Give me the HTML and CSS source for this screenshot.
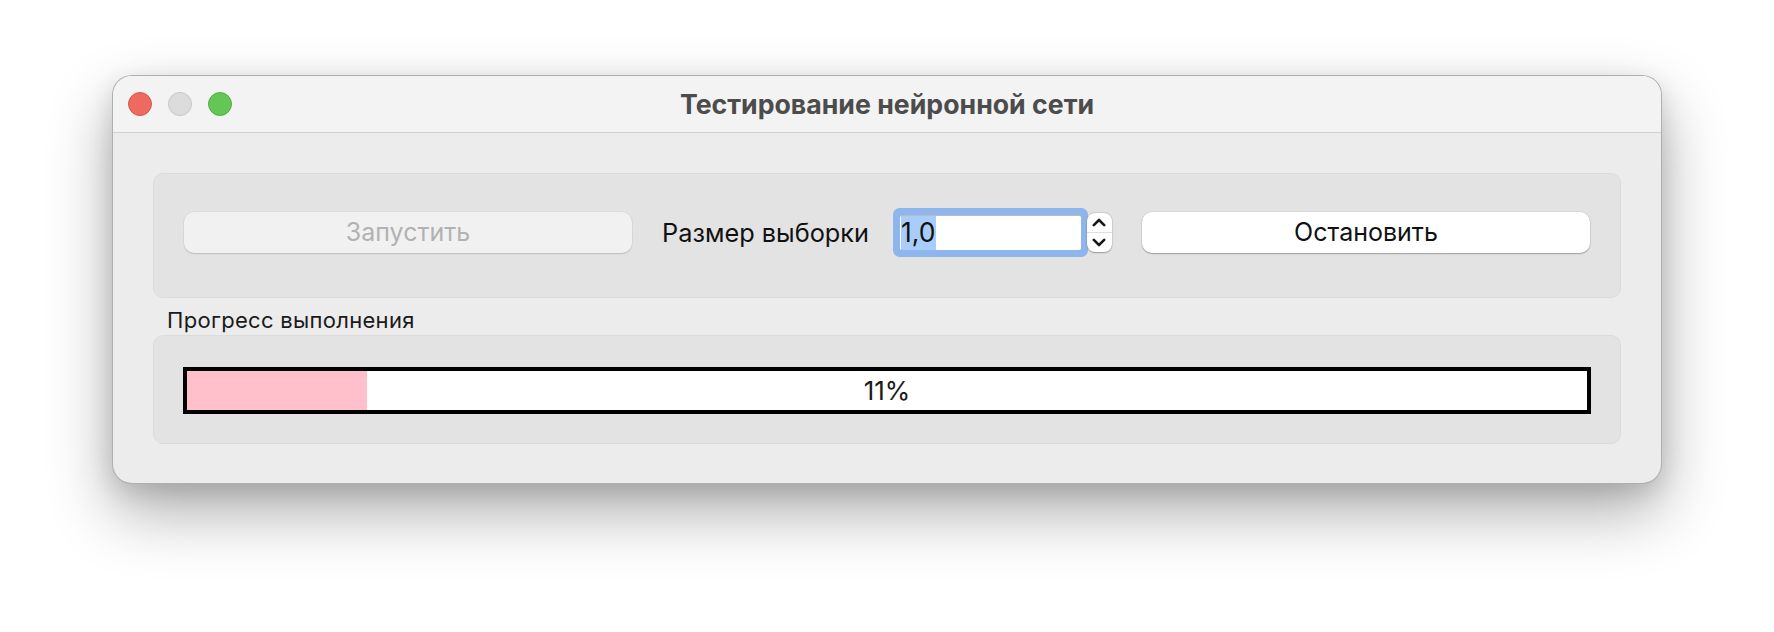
FILE: index.html
```html
<!DOCTYPE html>
<html lang="ru">
<head>
<meta charset="utf-8">
<title>Тестирование нейронной сети</title>
<link rel="stylesheet" href="styles.css">
</head>
<body>
<div class="stage">
  <div class="window">
    <div class="titlebar">
      <div class="lights">
        <span class="light red"></span>
        <span class="light gray"></span>
        <span class="light green"></span>
      </div>
      <div class="title">Тестирование нейронной сети</div>
      <div class="spacer"></div>
    </div>
    <div class="content">
      <div class="group controls">
        <button class="btn btn-disabled" disabled>Запустить</button>
        <span class="label">Размер выборки</span>
        <div class="spin">
          <div class="spin-field"><span class="sel">1,0</span></div>
          <div class="stepper">
            <div class="step up">
              <svg width="14" height="9" viewBox="0 0 14 9"><path d="M1.8 7.2 L7 2 L12.2 7.2" fill="none" stroke="#1a1a1a" stroke-width="2.6" stroke-linecap="round" stroke-linejoin="round"/></svg>
            </div>
            <div class="step down">
              <svg width="14" height="9" viewBox="0 0 14 9"><path d="M1.8 1.8 L7 7 L12.2 1.8" fill="none" stroke="#1a1a1a" stroke-width="2.6" stroke-linecap="round" stroke-linejoin="round"/></svg>
            </div>
          </div>
        </div>
        <button class="btn btn-stop">Остановить</button>
      </div>
      <div class="group-title">Прогресс выполнения</div>
      <div class="group progress-group">
        <div class="progress">
          <div class="progress-fill" style="width:12.85%"></div>
          <span class="progress-text">11%</span>
        </div>
      </div>
    </div>
  </div>
</div>
</body>
</html>
```
FILE: styles.css
```css
html, body {
  margin: 0;
  padding: 0;
  background: #ffffff;
}
body {
  width: 1774px;
  height: 632px;
  overflow: hidden;
  font-family: Inter, "Noto Sans", "Liberation Sans", sans-serif;
}
.stage {
  padding: 75px 0 0 112px;
}
.window {
  width: 1550px;
  height: 409px;
  box-sizing: border-box;
  border: 1px solid rgba(0, 0, 0, 0.26);
  border-radius: 20px;
  overflow: hidden;
  background: #ececec;
  box-shadow: 0 28px 64px rgba(0, 0, 0, 0.32), 0 8px 24px rgba(0, 0, 0, 0.12);
  display: flex;
  flex-direction: column;
}
.titlebar {
  height: 56px;
  flex: none;
  background: #f3f3f3;
  border-bottom: 1px solid #d2d2d2;
  display: grid;
  grid-template-columns: 1fr auto 1fr;
  align-items: center;
}
.lights {
  display: flex;
  gap: 16px;
  padding-left: 15px;
}
.light {
  width: 24px;
  height: 24px;
  border-radius: 50%;
  box-sizing: border-box;
}
.red { background: #ec6a5f; border: 1px solid #d35a4f; }
.gray { background: #dcdcdc; border: 1px solid #c6c6c6; }
.green { background: #63c655; border: 1px solid #55ad47; }
.title {
  font-size: 26.7px;
  font-weight: 700;
  color: #4c4c4c;
}
.content {
  flex: 1;
  padding: 40px 40px 40px 40px;
  display: flex;
  flex-direction: column;
}
.group {
  background: #e3e3e3;
  border: 1px solid #dbdbdb;
  border-radius: 10px;
  box-sizing: border-box;
}
.controls {
  height: 125px;
  display: flex;
  align-items: center;
  padding: 0 30px 7px 30px;
}
.btn {
  flex: 1;
  height: 41px;
  border: none;
  border-radius: 10px;
  font-family: inherit;
  font-size: 25px;
  padding: 0;
}
.btn-disabled {
  background: #f1f1f1;
  color: #b2b2b2;
  box-shadow: 0 1px 1.5px rgba(0, 0, 0, 0.14), 0 0 0 0.5px rgba(0, 0, 0, 0.05);
}
.btn-stop {
  background: #ffffff;
  color: #111111;
  box-shadow: 0 1px 1.5px rgba(0, 0, 0, 0.28), 0 0 0 0.5px rgba(0, 0, 0, 0.08);
}
.label {
  font-size: 25.3px;
  color: #111111;
  margin: 0 23px 0 30px;
  white-space: nowrap;
}
.spin {
  display: flex;
  align-items: center;
  margin-right: 30px;
}
.spin-field {
  width: 181px;
  height: 35px;
  box-sizing: border-box;
  background: #ffffff;
  border-top: 1px solid #b9b9b9;
  margin: 0 6px 0 8px;
  box-shadow: 0 0 0 7px #8fb6ec;
  border-radius: 2px;
  display: flex;
  align-items: stretch;
  padding-left: 1px;
  font-size: 26.5px;
  color: #111;
}
.sel {
  background: #a9cdfb;
  display: flex;
  align-items: center;
  line-height: 1;
  padding-right: 1px;
}
.stepper {
  width: 25px;
  height: 39px;
  background: #ffffff;
  border-radius: 8px;
  box-shadow: 0 0.5px 1.5px rgba(0, 0, 0, 0.3), 0 0 0 0.5px rgba(0, 0, 0, 0.08);
  display: flex;
  flex-direction: column;
}
.step {
  flex: 1;
  display: flex;
  align-items: center;
  justify-content: center;
}
.step.up {
  border-bottom: 1px solid #dedede;
}
.group-title {
  height: 37px;
  box-sizing: border-box;
  padding: 8px 0 0 14px;
  font-size: 22px;
  color: #1a1a1a;
  line-height: 29px;
  letter-spacing: 0.3px;
}
.progress-group {
  height: 109px;
  padding: 31px 29px 0 29px;
}
.progress {
  position: relative;
  height: 47px;
  box-sizing: border-box;
  border: 4px solid #000000;
  background: #ffffff;
  display: flex;
  align-items: center;
  justify-content: center;
}
.progress-fill {
  position: absolute;
  left: 0;
  top: 0;
  bottom: 0;
  background: #ffc0cb;
}
.progress-text {
  position: relative;
  font-size: 26px;
  color: #1a1a1a;
}
```
